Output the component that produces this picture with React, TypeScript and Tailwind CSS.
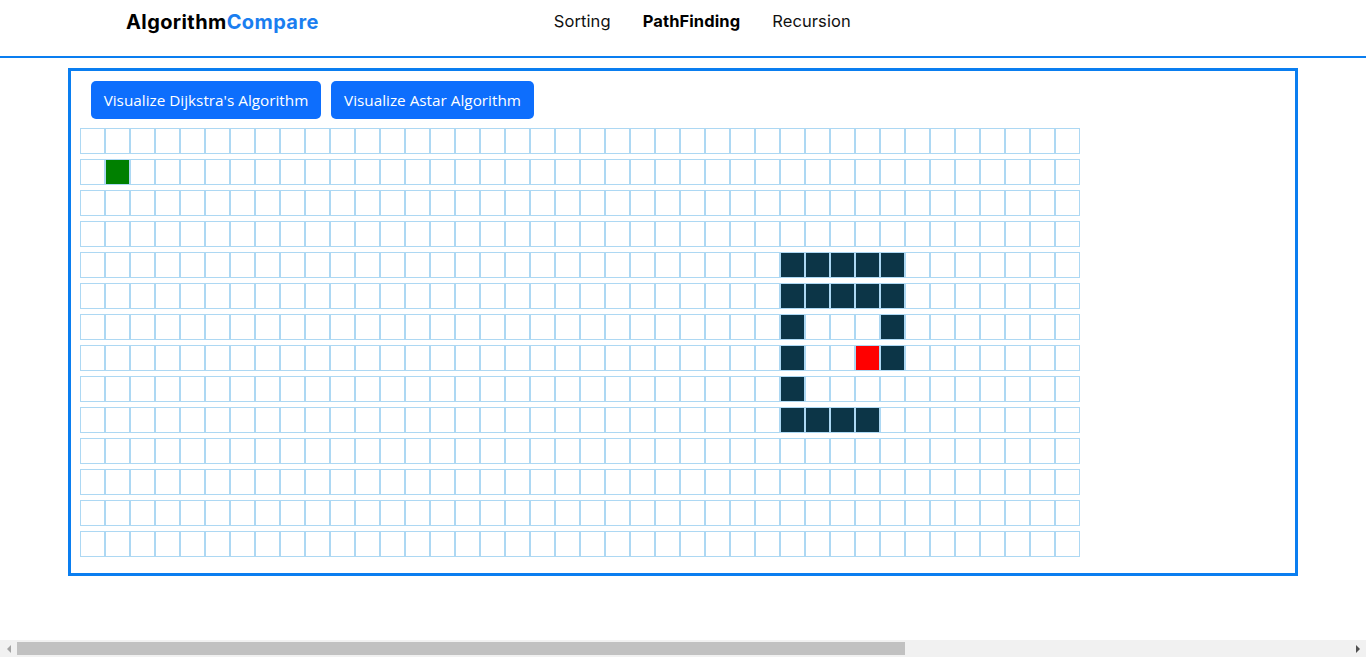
import React from 'react'

const ROWS = 14
const COLS = 40

const walls = new Set<string>([
  '4-28', '4-29', '4-30', '4-31', '4-32',
  '5-28', '5-29', '5-30', '5-31', '5-32',
  '6-28', '6-32',
  '7-28', '7-32',
  '8-28',
  '9-28', '9-29', '9-30', '9-31',
])

function cellColor(r: number, c: number) {
  if (r === 1 && c === 1) return 'bg-[#008000]'
  if (r === 7 && c === 31) return 'bg-[#ff0000]'
  if (walls.has(`${r}-${c}`)) return 'bg-[#0c3547]'
  return 'bg-white'
}

export default function App() {
  const heading = { fontFamily: 'Inter, "Noto Sans", sans-serif' }
  const btnFont = { fontFamily: '"Open Sans", "Noto Sans", sans-serif' }

  return (
    <div className="bg-white min-h-screen">
      {/* Navbar */}
      <nav className="h-[58px] border-b-2 border-[#0a7ef0] flex items-start" style={heading}>
        <div className="pl-[126px] pt-[7px] text-[20px] font-bold tracking-[0.4px]">
          <span className="text-black">Algorithm</span>
          <span className="text-[#1a7ef0]">Compare</span>
        </div>
        <ul className="flex gap-[32px] ml-[235px] pt-[9px] text-[16.5px] tracking-[0.1px] text-[#111]">
          <li>Sorting</li>
          <li className="font-bold text-black">PathFinding</li>
          <li>Recursion</li>
        </ul>
      </nav>

      {/* Visualizer */}
      <div className="ml-[68px] mt-[10px] w-[1230px] h-[508px] border-[3px] border-[#0a7ef0] px-[9px] pt-[10px]">
        <div className="flex gap-[10px] mb-[9px] ml-[11px]" style={btnFont}>
          <button className="h-[38px] px-[12px] rounded-[5px] bg-[#0d6efd] text-white text-[15.3px] w-[230px] whitespace-nowrap">
            Visualize Dijkstra's Algorithm
          </button>
          <button className="h-[38px] px-[12px] rounded-[5px] bg-[#0d6efd] text-white text-[15.3px] w-[203px] whitespace-nowrap">
            Visualize Astar Algorithm
          </button>
        </div>
        <div className="flex flex-col gap-[5px]">
          {Array.from({ length: ROWS }).map((_, r) => (
            <div key={r} className="flex">
              {Array.from({ length: COLS }).map((_, c) => (
                <div
                  key={c}
                  className={`w-[25px] h-[26px] border border-[#add8f3] ${cellColor(r, c)}`}
                />
              ))}
            </div>
          ))}
        </div>
      </div>

      {/* browser horizontal scrollbar */}
      <div className="fixed bottom-0 left-0 right-0 h-[17px] bg-[#f1f1f1] flex items-center">
        <div className="w-[17px] flex justify-center">
          <div className="w-0 h-0 border-y-[4px] border-y-transparent border-r-[4px] border-r-[#a3a3a3]" />
        </div>
        <div className="w-[888px] h-[13px] bg-[#c1c1c1]" />
        <div className="flex-1" />
        <div className="w-[17px] flex justify-center">
          <div className="w-0 h-0 border-y-[4px] border-y-transparent border-l-[4px] border-l-[#505050]" />
        </div>
      </div>
    </div>
  )
}
